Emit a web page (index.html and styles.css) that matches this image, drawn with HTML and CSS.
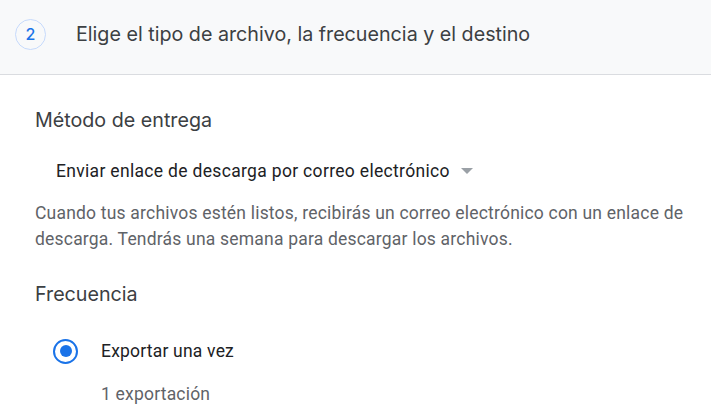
FILE: index.html
```html
<!DOCTYPE html>
<html lang="es">
<head>
    <meta charset="UTF-8">
    <title>Exportar datos</title>
    <link rel="stylesheet" href="styles.css">
</head>
<body>
    <div class="step-header">
        <div class="step-num">2</div>
        <h2 class="step-title">Elige el tipo de archivo, la frecuencia y el destino</h2>
    </div>
    <main class="step-body">
        <h3 class="section-title">Método de entrega</h3>
        <div class="select">
            <span class="select-value">Enviar enlace de descarga por correo electrónico</span>
            <span class="select-arrow"></span>
        </div>
        <p class="hint">Cuando tus archivos estén listos, recibirás un correo electrónico con un enlace de descarga. Tendrás una semana para descargar los archivos.</p>

        <h3 class="section-title freq">Frecuencia</h3>
        <label class="radio-row">
            <span class="radio checked"></span>
            <span class="radio-label">Exportar una vez</span>
        </label>
        <div class="radio-sub">1 exportación</div>
    </main>
</body>
</html>
```

FILE: styles.css
```css
:root {
    --bg-head: #f8f9fa; --border: #dadce0; --title: #3c4043;
    --text: #202124; --muted: #5f6368; --blue: #1a73e8;
}
body {
    margin: 0; background: #fff; color: var(--text);
    font-family: Roboto, "Liberation Sans", Arial, sans-serif;
    width: 711px; height: 411px; overflow: hidden;
}
.step-header {
    display: flex; align-items: center; height: 75px; box-sizing: border-box;
    background: var(--bg-head); border-bottom: 1px solid var(--border);
    padding: 0 0 7px 15px;
}
.step-num {
    width: 29px; height: 29px; border: 1px solid #c6dafc; border-radius: 50%;
    display: flex; align-items: center; justify-content: center;
    color: var(--blue); font-family: Inter, sans-serif; font-size: 16px; font-weight: 500;
    flex-shrink: 0; margin-top: 1px;
}
.step-title {
    margin: 0 0 0 30px; font-family: Inter, sans-serif; font-weight: 400;
    font-size: 19.7px; color: var(--title); white-space: nowrap;
}
.step-body { padding: 0 0 0 35px; }
.section-title {
    margin: 0; padding-top: 33px; font-family: Inter, sans-serif; font-weight: 400;
    font-size: 19.7px; color: var(--title); line-height: 24px;
}
.select {
    display: flex; align-items: center; margin: 27px 0 0 21px; height: 24px;
}
.select-value { font-size: 17.5px; letter-spacing: 0.32px; color: var(--text); }
.select-arrow {
    margin-left: 11px; width: 0; height: 0;
    border-left: 6px solid transparent; border-right: 6px solid transparent;
    border-top: 6px solid #9aa0a6;
}
.hint {
    margin: 17px 0 0; font-size: 17.5px; line-height: 26px; letter-spacing: 0.2px;
    color: var(--muted); max-width: 660px;
}
.section-title.freq { padding-top: 30px; }
.radio-row { display: flex; align-items: center; margin: 32px 0 0 18px; height: 26px; }
.radio {
    width: 25px; height: 25px; box-sizing: border-box; border-radius: 50%;
    border: 2.5px solid var(--blue); display: flex; align-items: center; justify-content: center;
}
.radio.checked::after {
    content: ""; width: 12px; height: 12px; border-radius: 50%; background: var(--blue);
}
.radio-label { margin-left: 23px; font-size: 17.5px; letter-spacing: 0.2px; color: var(--text); }
.radio-sub { margin: 20px 0 0 66px; font-size: 17.5px; letter-spacing: 0.2px; color: var(--muted); }
```
